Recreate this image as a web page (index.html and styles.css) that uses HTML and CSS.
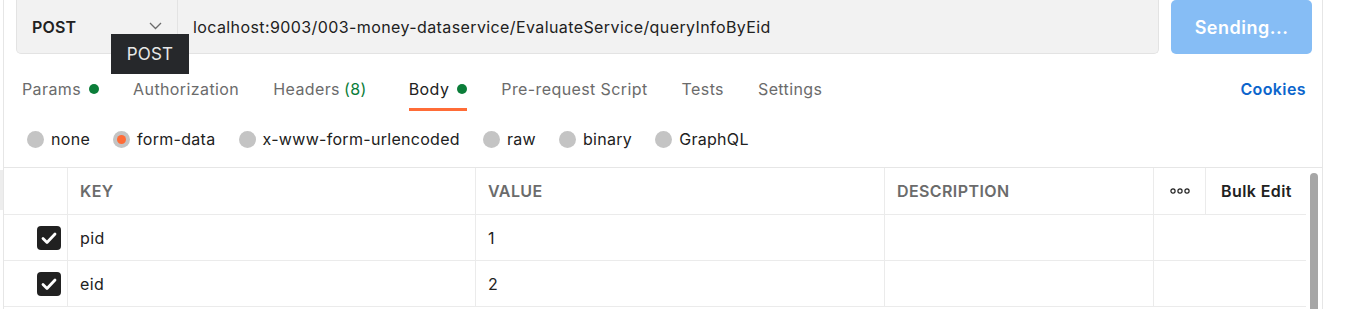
FILE: index.html
```html
<!DOCTYPE html>
<html lang="en">
<head>
  <meta charset="UTF-8">
  <title>Request</title>
  <link rel="stylesheet" href="styles.css">
</head>
<body>
  <div class="gutter"><div class="handle"></div></div>

  <div class="pane">
    <!-- url bar -->
    <div class="urlbar">
      <div class="request">
        <div class="method">
          <span>POST</span>
          <svg class="chevron" width="13" height="8" viewBox="0 0 13 8"><path d="M1 1l5.5 5.5L12 1" fill="none" stroke="#6b6b6b" stroke-width="1.3"/></svg>
          <div class="tooltip">POST</div>
        </div>
        <div class="url">localhost:9003/003-money-dataservice/EvaluateService/queryInfoByEid</div>
      </div>
      <button class="send">Sending...</button>
    </div>

    <!-- tabs -->
    <div class="tabs">
      <div class="tab">Params <i class="dot"></i></div>
      <div class="tab">Authorization</div>
      <div class="tab">Headers <span class="count">(8)</span></div>
      <div class="tab active">Body <i class="dot"></i></div>
      <div class="tab">Pre-request Script</div>
      <div class="tab">Tests</div>
      <div class="tab">Settings</div>
      <div class="cookies">Cookies</div>
    </div>

    <!-- body types -->
    <div class="types">
      <label class="type"><i class="radio"></i>none</label>
      <label class="type"><i class="radio on"></i>form-data</label>
      <label class="type"><i class="radio"></i>x-www-form-urlencoded</label>
      <label class="type"><i class="radio"></i>raw</label>
      <label class="type"><i class="radio"></i>binary</label>
      <label class="type"><i class="radio"></i>GraphQL</label>
    </div>

    <!-- params table -->
    <div class="grid-wrap">
      <div class="grid">
        <div class="row head">
          <div class="cell check"></div>
          <div class="cell key">KEY</div>
          <div class="cell value">VALUE</div>
          <div class="cell desc">DESCRIPTION</div>
          <div class="cell more">
            <svg width="20" height="6" viewBox="0 0 20 6"><circle cx="3" cy="3" r="2.1" fill="none" stroke="#212121" stroke-width="1.2"/><circle cx="10" cy="3" r="2.1" fill="none" stroke="#212121" stroke-width="1.2"/><circle cx="17" cy="3" r="2.1" fill="none" stroke="#212121" stroke-width="1.2"/></svg>
          </div>
          <div class="cell bulk">Bulk Edit</div>
        </div>
        <div class="row">
          <div class="cell check"><span class="box"><svg width="24" height="24" viewBox="0 0 24 24"><path d="M6 12.5l4 4 8-8.5" fill="none" stroke="#fff" stroke-width="2.8" stroke-linecap="round" stroke-linejoin="round"/></svg></span></div>
          <div class="cell key">pid</div>
          <div class="cell value">1</div>
          <div class="cell desc"></div>
          <div class="cell tail"></div>
        </div>
        <div class="row">
          <div class="cell check"><span class="box"><svg width="24" height="24" viewBox="0 0 24 24"><path d="M6 12.5l4 4 8-8.5" fill="none" stroke="#fff" stroke-width="2.8" stroke-linecap="round" stroke-linejoin="round"/></svg></span></div>
          <div class="cell key">eid</div>
          <div class="cell value">2</div>
          <div class="cell desc"></div>
          <div class="cell tail"></div>
        </div>
      </div>
      <div class="scrollbar"></div>
    </div>
  </div>
</body>
</html>
```

FILE: styles.css
```css
/* page */
body {
  margin: 0;
  font-family: Inter, 'Noto Sans', sans-serif;
  font-size: 16px;
  letter-spacing: 0.4px;
  color: #212121;
  background: #fff;
  display: flex;
  height: 309px;
  overflow: hidden;
}

.gutter {
  width: 3px;
}

.handle {
  margin-top: 170px;
  height: 40px;
  background: #ededed;
}

.pane {
  width: 1318px;
  border-left: 1px solid #e6e6e6;
  border-right: 1px solid #e6e6e6;
}

/* url bar */
.urlbar {
  display: flex;
  gap: 12px;
  padding: 0 10px 0 12px;
  height: 54px;
}

.request {
  display: flex;
  width: 1142px;
  background: #f2f2f2;
  border: 1px solid #e3e3e3;
  border-top: none;
  border-radius: 0 0 5px 5px;
}

.method {
  position: relative;
  width: 161px;
  border-right: 1px solid #e3e3e3;
  display: flex;
  align-items: center;
  padding: 0 15px 0 15px;
  box-sizing: border-box;
  font-weight: 600;
  letter-spacing: 0.2px;
}

.method span {
  flex: 1;
}

.chevron {
  margin-top: -1px;
}

.tooltip {
  position: absolute;
  left: 94px;
  top: 34px;
  width: 78px;
  height: 40px;
  background: #26282b;
  color: #e8e8e8;
  font-weight: 400;
  font-size: 17px;
  display: flex;
  align-items: center;
  justify-content: center;
  z-index: 2;
}

.url {
  display: flex;
  align-items: center;
  padding-left: 15px;
  color: #212121;
}

.send {
  width: 141px;
  border: none;
  border-radius: 5px;
  background: #86bdf5;
  color: #fff;
  font-family: inherit;
  font-size: 18px;
  font-weight: 600;
  letter-spacing: 0.5px;
}

/* tabs */
.tabs {
  display: flex;
  align-items: center;
  height: 57px;
  padding: 0 16px 0 18px;
  gap: 34px;
  color: #6b6b6b;
}

.tab {
  height: 57px;
  display: flex;
  align-items: center;
  gap: 8px;
  padding-top: 15px;
  box-sizing: border-box;
  border-bottom: 3px solid transparent;
}

.tab.active {
  color: #212121;
  border-bottom-color: #ff6c37;
  margin-left: 8px;
}

.dot {
  width: 10px;
  height: 10px;
  border-radius: 50%;
  background: #0b7d39;
}

.count {
  color: #0b7d39;
  margin-left: -4px;
}

.cookies {
  margin-left: auto;
  color: #0b65cc;
  font-weight: 600;
  padding-top: 12px;
}

/* body types */
.types {
  display: flex;
  align-items: center;
  gap: 23px;
  height: 56px;
  padding-left: 23px;
  letter-spacing: 0.3px;
  border-bottom: 1px solid #e6e6e6;
}

.type {
  display: flex;
  align-items: center;
  gap: 7px;
}

.radio {
  width: 17px;
  height: 17px;
  border-radius: 50%;
  background: #c4c4c4;
  display: flex;
  align-items: center;
  justify-content: center;
}

.radio.on::after {
  content: "";
  width: 9px;
  height: 9px;
  border-radius: 50%;
  background: #ff6c37;
}

/* table */
.grid-wrap {
  display: flex;
  gap: 4px;
}

.grid {
  width: 1302px;
}

.row {
  display: flex;
  height: 45px;
  border-bottom: 1px solid #ebebeb;
}

.row.head {
  height: 46px;
  font-weight: 600;
  color: #6b6b6b;
}

.cell {
  display: flex;
  align-items: center;
  box-sizing: border-box;
  border-right: 1px solid #ebebeb;
  padding-left: 12px;
}

.check {
  width: 64px;
  justify-content: flex-end;
  padding: 0 6px 0 0;
}

.key {
  width: 408px;
}

.value {
  width: 409px;
}

.desc {
  width: 269px;
}

.more {
  width: 52px;
  padding: 0;
  justify-content: center;
}

.bulk {
  width: 100px;
  border-right: none;
  padding-left: 15px;
  color: #212121;
}

.tail {
  flex: 1;
  border-right: none;
}

.box {
  width: 24px;
  height: 24px;
  border-radius: 4px;
  background: #212121;
  display: flex;
  align-items: center;
  justify-content: center;
}

.scrollbar {
  width: 8px;
  margin-top: 5px;
  height: 137px;
  border-radius: 4px 4px 0 0;
  background: #a6a6a6;
}
```
